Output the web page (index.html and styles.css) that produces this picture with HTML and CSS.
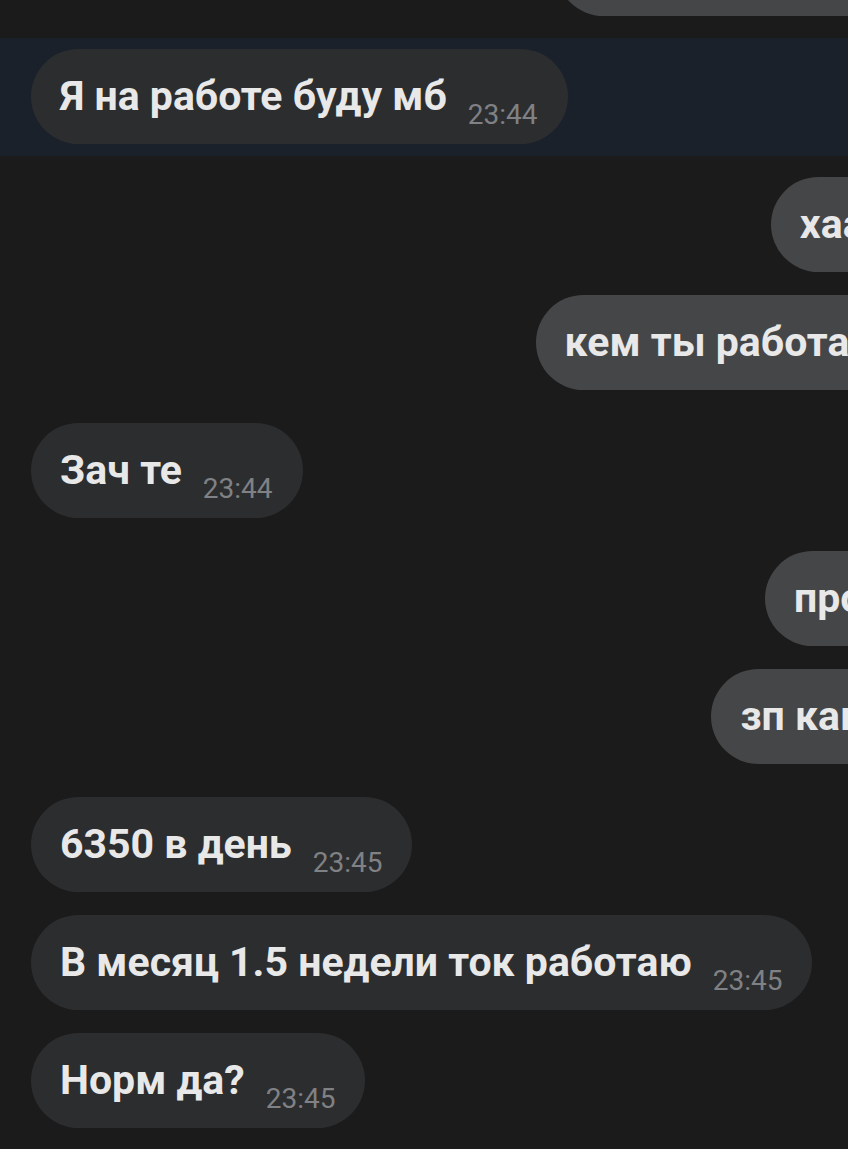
FILE: index.html
```html
<!DOCTYPE html>
<html lang="ru">
<head>
  <meta charset="UTF-8">
  <title>Чат</title>
  <meta name="viewport" content="width=device-width, initial-scale=1">
  <link rel="stylesheet" href="styles.css">
</head>
<body>

  <div class="chat">

    <div class="row out first">
      <div class="bubble"><span class="text">ну а ты где утром</span><span class="time">23:43</span></div>
    </div>

    <div class="row in group selected">
      <div class="bubble"><span class="text">Я на работе буду мб</span><span class="time">23:44</span></div>
    </div>

    <div class="row out group">
      <div class="bubble"><span class="text">хаахах</span><span class="time">23:44</span></div>
    </div>
    <div class="row out">
      <div class="bubble"><span class="text">кем ты работаешь</span><span class="time">23:44</span></div>
    </div>

    <div class="row in group">
      <div class="bubble"><span class="text">Зач те</span><span class="time">23:44</span></div>
    </div>

    <div class="row out group">
      <div class="bubble"><span class="text">просто</span><span class="time">23:44</span></div>
    </div>
    <div class="row out">
      <div class="bubble"><span class="text">зп какая?</span><span class="time">23:45</span></div>
    </div>

    <div class="row in group">
      <div class="bubble"><span class="text">6350 в день</span><span class="time">23:45</span></div>
    </div>
    <div class="row in">
      <div class="bubble"><span class="text">В месяц 1.5 недели ток работаю</span><span class="time">23:45</span></div>
    </div>
    <div class="row in">
      <div class="bubble"><span class="text">Норм да?</span><span class="time">23:45</span></div>
    </div>

  </div>

</body>
</html>
```

FILE: styles.css
```css
html, body {
  margin:0;
  padding:0;
}

body {
  background:#1b1b1b;
  color:#e8e8e9;
  font-family:Roboto, "Noto Sans", sans-serif;
  overflow:hidden;
  height:1149px;
}

/* the screenshot is cropped, the chat is wider than the window */
.chat {
  width:1080px;
}

.row {
  display:flex;
  padding:11px 31px 12px;
}

.row.group {
  margin-top:10px;
}

.row.first {
  margin-top:-90px;
}

.row.in {
  justify-content:flex-start;
}

.row.out {
  justify-content:flex-end;
}

.row.selected {
  background:#1a212b;
}

.bubble {
  box-sizing:border-box;
  height:95px;
  padding:25px 30px 0 29px;
  border-radius:48px;
  background:#2c2d2f;
  white-space:nowrap;
  line-height:45px;
}

.out .bubble {
  background:#454648;
}

.text {
  font-size:41px;
  font-weight:700;
}

.time {
  font-size:28px;
  line-height:0;
  color:#808184;
  margin-left:21px;
  vertical-align:-14px;
}
```
